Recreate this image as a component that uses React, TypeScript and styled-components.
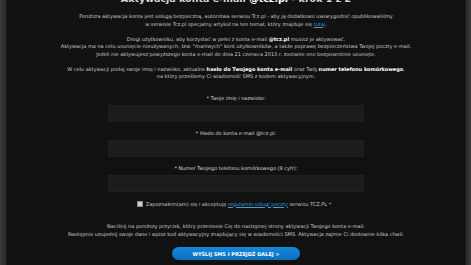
import React from 'react'
import styled, { createGlobalStyle } from 'styled-components'

const GlobalStyle = createGlobalStyle`
    html, body {
        margin: 0;
        padding: 0;
        background: #2e2e2e;
        height: 265px;
        overflow: hidden;
    }
    body {
        font-family: "DejaVu Sans", Verdana, sans-serif;
    }
`

const Page = styled.div`
    display: flex;
    height: 265px;
    padding: 0 5px 0 6px;
    background: linear-gradient(90deg, #3a3a3a 0, #2b2b2b 6px, #2b2b2b calc(100% - 5px), #3a3a3a 100%);
`

const Panel = styled.div`
    flex: 1;
    background: #111111;
    border-left: 1px solid #1c1c1c;
    border-right: 1px solid #1c1c1c;
    color: #c9c9c9;
    font-size: 5px;
    text-align: center;
    overflow: hidden;
`

const Title = styled.h1`
    margin: -6px 0 0;
    height: 10px;
    font-size: 9.5px;
    line-height: 10px;
    font-weight: bold;
    color: #d8d8d8;

    b {
        color: #ffffff;
    }
`

const Para = styled.p<{ $gap?: number }>`
    margin: ${p => p.$gap ?? 7.5}px 0 0;
    line-height: 7.5px;

    b {
        color: #ffffff;
    }
`

const Link = styled.a`
    color: #3ea0dc;
    text-decoration: underline;
`

const Form = styled.div`
    display: flex;
    flex-direction: column;
    align-items: center;
    gap: 8px;
    margin-top: 14px;
`

const Field = styled.div`
    display: flex;
    flex-direction: column;
    align-items: center;
    gap: 2.5px;
`

const Label = styled.label`
    line-height: 7.5px;
    color: #d6d6d6;
`

const Input = styled.div`
    width: 256px;
    height: 17px;
    background: #1c1c1c;
    border: 1px solid #1f1f1f;
    box-sizing: border-box;
`

const CheckRow = styled.div`
    display: flex;
    align-items: center;
    justify-content: center;
    gap: 3px;
    margin-top: 9px;
    line-height: 7.5px;
    margin-left: -4px;
`

const Box = styled.span`
    width: 4px;
    height: 4px;
    background: #d0d0d0;
    border: 0.5px solid #888;
`

const Button = styled.button`
    display: block;
    margin: 9px auto 0;
    width: 128px;
    height: 13px;
    border: none;
    border-radius: 7px;
    background: linear-gradient(#1488d8, #0a70bd);
    color: #ffffff;
    font-family: "DejaVu Sans", Verdana, sans-serif;
    font-size: 5px;
    font-weight: bold;
    padding: 0;
`

export default function App() {
    return (
        <>
            <GlobalStyle />
            <Page>
                <Panel>
                    <Title>Aktywacja konta e-mail <b>@tcz.pl</b> - krok 1 z 2</Title>
                    <Para $gap={9}>
                        Poniższa aktywacja konta jest usługą bezpieczną, autorstwa serwisu Tcz.pl - aby ją dodatkowo uwiarygodnić opublikowaliśmy<br />
                        w serwisie Tcz.pl specjalny artykuł na ten temat, który znajduje się <Link>tutaj</Link>.
                    </Para>
                    <Para>
                        Drogi użytkowniku, aby korzystać w pełni z konta e-mail <b>@tcz.pl</b> musisz je aktywować.<br />
                        Aktywacja ma na celu usunięcie nieużywanych, tzw. "martwych" kont użytkowników, a także poprawę bezpieczeństwa Twojej poczty e-mail.<br />
                        Jeżeli nie aktywujesz powyższego konta e-mail do dnia 21 czerwca 2013 r. zostanie ono bezpowrotnie usunięte.
                    </Para>
                    <Para>
                        W celu aktywacji podaj swoje imię i nazwisko, aktualne <b>hasło do Twojego konta e-mail</b> oraz Twój <b>numer telefonu komórkowego</b>,<br />
                        na który prześlemy Ci wiadomość SMS z kodem aktywacyjnym.
                    </Para>
                    <Form>
                        <Field>
                            <Label>* Twoje imię i nazwisko:</Label>
                            <Input />
                        </Field>
                        <Field>
                            <Label>* Hasło do konta e-mail @tcz.pl:</Label>
                            <Input />
                        </Field>
                        <Field>
                            <Label>* Numer Twojego telefonu komórkowego (9 cyfr):</Label>
                            <Input />
                        </Field>
                    </Form>
                    <CheckRow>
                        <Box />
                        <span>Zapoznałem(am) się i akceptuję <Link>regulamin usługi poczty</Link> serwisu TCZ.PL *</span>
                    </CheckRow>
                    <Para $gap={15}>
                        Naciśnij na poniższy przycisk, który przeniesie Cię do następnej strony aktywacji Twojego konta e-mail.<br />
                        Następnie uzupełnij swoje dane i wpisz kod aktywacyjny znajdujący się w wiadomości SMS. Aktywacja zajmie Ci dosłownie kilka chwil.
                    </Para>
                    <Button>WYŚLIJ SMS I PRZEJDŹ DALEJ &gt;</Button>
                </Panel>
            </Page>
        </>
    )
}
